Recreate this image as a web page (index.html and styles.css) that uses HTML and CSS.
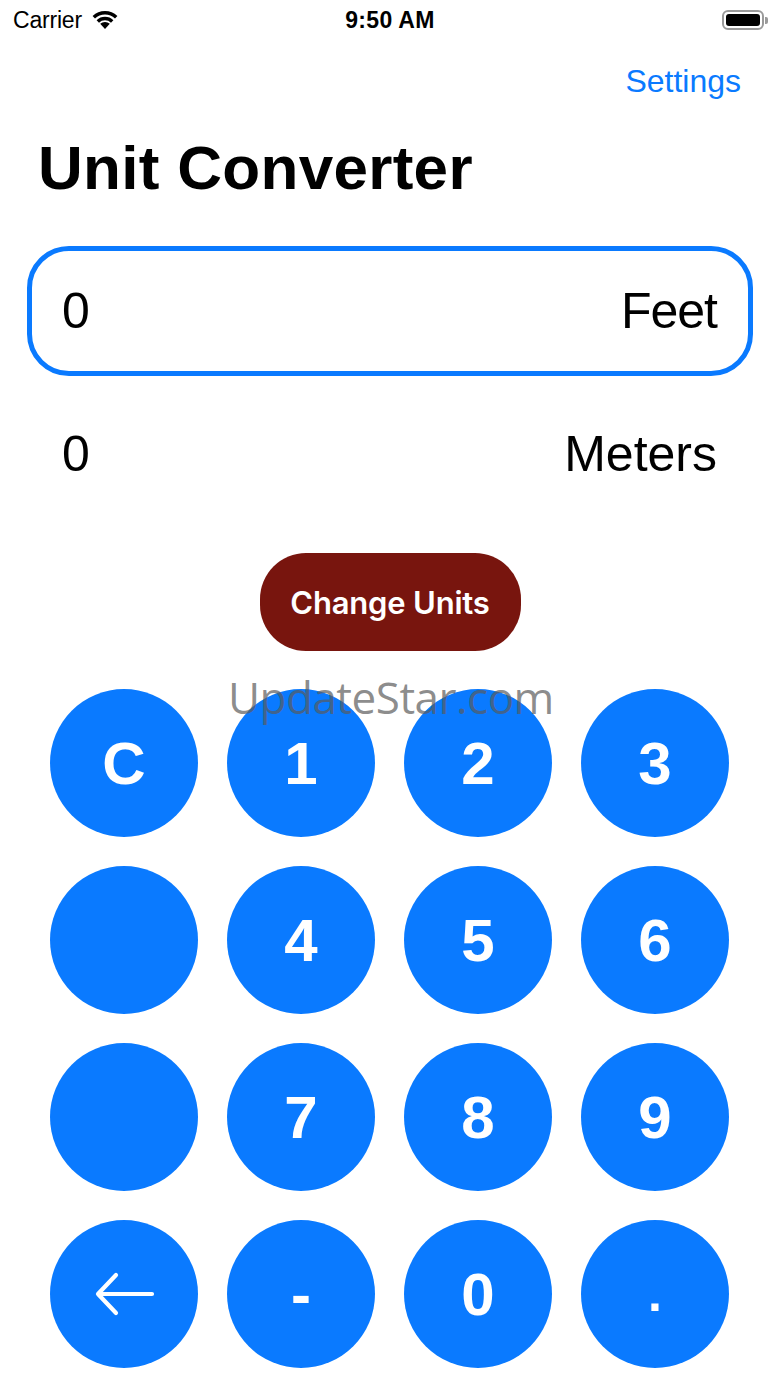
FILE: index.html
```html
<!DOCTYPE html>
<html lang="en">
<head>
<meta charset="utf-8">
<title>Unit Converter</title>
<link rel="stylesheet" href="styles.css">
</head>
<body>
<div class="screen">
  <div class="status-bar">
    <div class="sb-left">
      <span class="carrier">Carrier</span>
      <svg class="wifi" width="28" height="22" viewBox="0 0 28 22">
        <path d="M14 21 L9.2 15.8 A7 7 0 0 1 18.8 15.8 Z" fill="#000"/>
        <path d="M5.6 12.2 A12 12 0 0 1 22.4 12.2 L20 14.7 A8.6 8.6 0 0 0 8 14.7 Z" fill="#000"/>
        <path d="M1.6 8 A18 18 0 0 1 26.4 8 L24 10.6 A14.5 14.5 0 0 0 4 10.6 Z" fill="#000"/>
      </svg>
    </div>
    <div class="sb-time">9:50 AM</div>
    <div class="sb-right">
      <div class="battery"><div class="battery-fill"></div></div>
      <div class="battery-tip"></div>
    </div>
  </div>

  <div class="nav">
    <a class="settings">Settings</a>
  </div>

  <h1 class="title">Unit Converter</h1>

  <div class="field">
    <span class="value">0</span>
    <span class="unit">Feet</span>
  </div>

  <div class="result">
    <span class="value">0</span>
    <span class="unit">Meters</span>
  </div>

  <div class="button-row">
    <button class="change-btn">Change Units</button>
  </div>

  <div class="keypad">
    <div class="key">C</div>
    <div class="key">1</div>
    <div class="key">2</div>
    <div class="key">3</div>
    <div class="key"></div>
    <div class="key">4</div>
    <div class="key">5</div>
    <div class="key">6</div>
    <div class="key"></div>
    <div class="key">7</div>
    <div class="key">8</div>
    <div class="key">9</div>
    <div class="key">
      <svg width="64" height="54" viewBox="0 0 64 54">
        <path d="M60 27 H6 M24 8 L6 27 L24 46" fill="none" stroke="#fff" stroke-width="4.2" stroke-linecap="round" stroke-linejoin="round"/>
      </svg>
    </div>
    <div class="key minus">-</div>
    <div class="key">0</div>
    <div class="key dot">.</div>
    <div class="watermark">UpdateStar.com</div>
  </div>
</div>
</body>
</html>
```

FILE: styles.css
```css
* { box-sizing: border-box; }

html, body {
  margin: 0;
  padding: 0;
  background: #fff;
}

body {
  font-family: "Liberation Sans", Arial, sans-serif;
  color: #000;
}

.screen {
  width: 780px;
  height: 1387px;
  overflow: hidden;
  position: relative;
}

.status-bar {
  height: 40px;
  display: flex;
  align-items: center;
  justify-content: space-between;
  padding: 0 12px 0 13px;
  position: relative;
}

.sb-left {
  display: flex;
  align-items: center;
  gap: 9px;
  width: 200px;
}

.carrier {
  font-size: 23px;
  letter-spacing: -0.2px;
}

.wifi { margin-top: -2px; }

.sb-time {
  font-size: 23px;
  font-weight: 700;
  letter-spacing: 0.3px;
  position: absolute;
  left: 0;
  right: 0;
  text-align: center;
  pointer-events: none;
}

.sb-right {
  display: flex;
  align-items: center;
  justify-content: flex-end;
  width: 200px;
}

.battery {
  width: 42px;
  height: 20px;
  border: 2px solid #9a9a9a;
  border-radius: 6px;
  padding: 2px;
}

.battery-fill {
  width: 100%;
  height: 100%;
  background: #000;
  border-radius: 3px;
}

.battery-tip {
  width: 3px;
  height: 7px;
  background: #9a9a9a;
  border-radius: 0 2px 2px 0;
  margin-left: 1px;
}

.nav {
  display: flex;
  justify-content: flex-end;
  padding: 21px 39px 0 0;
}

.settings {
  font-size: 32px;
  line-height: 40px;
  color: #0a7aff;
}

.title {
  margin: 31px 0 0 38px;
  font-size: 62px;
  line-height: 72px;
  font-weight: 700;
  letter-spacing: 0.3px;
}

.field {
  margin: 42px 27px 0 27px;
  height: 130px;
  border: 5px solid #0a7aff;
  border-radius: 42px;
  display: flex;
  align-items: center;
  justify-content: space-between;
  padding: 0 31px 0 30px;
  font-size: 50px;
}

.result {
  margin: 48px 27px 0 27px;
  height: 60px;
  display: flex;
  align-items: center;
  justify-content: space-between;
  padding: 0 36px 0 35px;
  font-size: 50px;
}

.field .unit {
  letter-spacing: -1px;
}

.result .unit {
  letter-spacing: 0;
}

.button-row {
  display: flex;
  justify-content: center;
  margin-top: 69px;
}

.change-btn {
  width: 261px;
  height: 98px;
  border: none;
  border-radius: 46px;
  background: #78150e;
  color: #fff;
  font-family: "Inter", "Liberation Sans", sans-serif;
  font-size: 31px;
  font-weight: 600;
  letter-spacing: -0.2px;
  padding: 0;
}

.keypad {
  position: relative;
  margin: 38px auto 0 auto;
  width: 680px;
  display: grid;
  grid-template-columns: repeat(4, 148px);
  grid-auto-rows: 148px;
  column-gap: 29px;
  row-gap: 29px;
}

.key {
  width: 148px;
  height: 148px;
  border-radius: 50%;
  background: #0a7aff;
  color: #fff;
  display: flex;
  align-items: center;
  justify-content: center;
  font-size: 60px;
  font-weight: 700;
}

.key.minus {
  font-size: 60px;
}

.key.dot {
  font-size: 50px;
}

.watermark {
  position: absolute;
  left: 178px;
  top: -22px;
  font-family: "Open Sans", "DejaVu Sans", sans-serif;
  font-size: 44px;
  color: rgba(90, 90, 90, 0.7);
  letter-spacing: -0.5px;
  pointer-events: none;
}
```
